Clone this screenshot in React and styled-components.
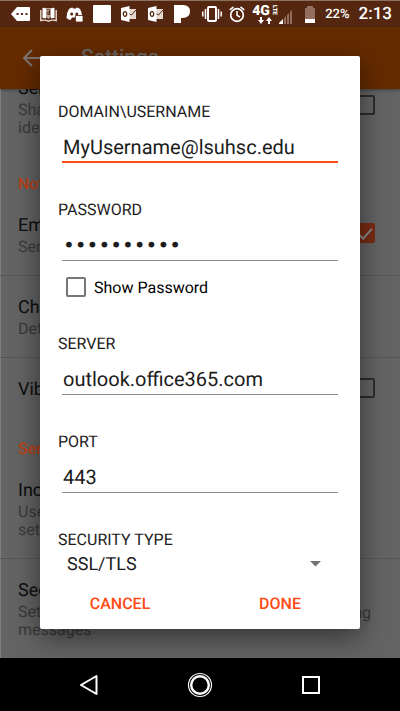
import React, { useState } from 'react';
import styled, { createGlobalStyle } from 'styled-components';

const App = () => {
  const [form, setForm] = useState({
    username: 'MyUsername@lsuhsc.edu',
    password: 'password12',
    server: 'outlook.office365.com',
    port: '443',
    security: 'SSL/TLS',
  });
  const [showPassword, setShowPassword] = useState(false);

  const onChange = e => setForm({ ...form, [e.target.name]: e.target.value });

  return (
    <Screen>
      <GlobalStyle />
      <StatusBar />
      <AppBar>
        <BackButton aria-label='Back'>
          <svg width='22' height='20' viewBox='0 0 22 20'>
            <path d='M10 2 2 10l8 8M2 10h19' />
          </svg>
        </BackButton>
        <Title>Settings</Title>
      </AppBar>
      <SettingList />
      <NavBar />
      <Overlay>
        <Dialog
          role='dialog'
          aria-label='Server settings'
          onSubmit={e => e.preventDefault()}
        >
          <Field
            label='DOMAIN\USERNAME'
            name='username'
            value={form.username}
            onChange={onChange}
            $active
          />
          <Field
            label='PASSWORD'
            name='password'
            type={showPassword ? 'text' : 'password'}
            value={form.password}
            onChange={onChange}
          />
          <ShowPassword>
            <CheckBox
              type='checkbox'
              checked={showPassword}
              onChange={() => setShowPassword(!showPassword)}
            />
            Show Password
          </ShowPassword>
          <Field
            label='SERVER'
            name='server'
            value={form.server}
            onChange={onChange}
          />
          <Field
            label='PORT'
            name='port'
            value={form.port}
            onChange={onChange}
          />
          <Label htmlFor='security'>SECURITY TYPE</Label>
          <SelectBox>
            <Select
              id='security'
              name='security'
              value={form.security}
              onChange={onChange}
            >
              <option>SSL/TLS</option>
            </Select>
            <svg width='11' height='6' viewBox='0 0 11 6'>
              <path d='M0 0h11L5.500 5.500z' fill='#737373' />
            </svg>
          </SelectBox>
          <Actions>
            <ActionButton type='button'>CANCEL</ActionButton>
            <ActionButton type='submit'>DONE</ActionButton>
          </Actions>
        </Dialog>
      </Overlay>
    </Screen>
  );
};

export default App;

const Field = ({ label, name, $active, ...rest }) => (
  <FieldGroup>
    <Label htmlFor={name}>{label}</Label>
    <Input id={name} name={name} $active={$active} {...rest} />
  </FieldGroup>
);

const StatusBar = () => (
  <StatusRow>
    <StatusGroup $gap='9px'>
      {/* message */}
      <svg width='20' height='18' viewBox='0 0 20 18'>
        <path d='M6 2h12q1 0 1 1v12q0 1-1 1H6L0 9z' fill='#fff' />
        <path d='M5.500 8h2v2h-2zM10 8h2v2h-2zM14.500 8h2v2h-2z' fill='#552711' />
      </svg>
      {/* reader */}
      <svg width='17' height='18' viewBox='0 0 17 18'>
        <path
          d='M.8 5v10.500q4-1 7.700.7 3.700-1.700 7.700-.7V5'
          fill='none'
          stroke='#e6d9d2'
          strokeWidth='1.400'
        />
        <path d='M2.500 3q2-.5 3.500.5v10q-1.500-.8-3.500-.5zM14.500 3q-2-.5-3.500.5v10q1.500-.8 3.500-.5z' fill='#fff' />
        <path d='M6 3h5v9l-2.500 2L6 12z' fill='#bda79c' />
        <path d='M7 5q1.500-1 2.500 0v5M9.500 7Q7 7 7 8.500T9.500 9' fill='none' stroke='#552711' />
      </svg>
      {/* chat */}
      <svg width='18' height='18' viewBox='0 0 18 18'>
        <path
          d='M3 4q1.500-1.300 3.500-1.500L7 3.500h3l.5-1q2 .2 3.500 1.500 2 3 2 6.500h-6v2H6L4.500 15Q2 14.500.5 13 .5 7.500 3 4z'
          fill='#fff'
        />
        <circle cx='5.700' cy='9' r='1.500' fill='#552711' />
        <circle cx='10.800' cy='9' r='1.500' fill='#552711' />
        <path d='M9.500 10.500h7.500V17H9.500z' fill='#fff' stroke='#552711' strokeWidth='.8' />
      </svg>
      <svg width='18' height='18' viewBox='0 0 18 18'>
        <rect width='18' height='18' rx='1' fill='#fff' />
      </svg>
      <OutlookIcon />
      <OutlookIcon />
      {/* music */}
      <svg width='17' height='18' viewBox='0 0 17 18'>
        <path d='M0 0h9q7 0 7 6.500T8.500 13H7v5H0z' fill='#fff' />
      </svg>
    </StatusGroup>
    <StatusGroup $gap='7px'>
      {/* vibrate */}
      <svg width='20' height='18' viewBox='0 0 20 18' fill='none' stroke='#fff'>
        <rect x='6' y='2' width='8' height='14' rx='1' strokeWidth='2' />
        <path d='M3.500 4v10M.8 6.500v5M16.500 4v10M19.200 6.500v5' strokeWidth='1.500' />
      </svg>
      {/* alarm */}
      <svg width='16' height='18' viewBox='0 0 16 18' fill='none' stroke='#fff'>
        <circle cx='8' cy='10' r='6.300' strokeWidth='1.700' />
        <path d='M8 6v4.300l3 1.700M.8 4.800 4.500 1.800M15.200 4.800l-3.700-3' strokeWidth='1.500' />
      </svg>
      <StatusGroup $gap='1px'>
        <Network>
          <NetworkType>
            4G<small>LTE</small>
          </NetworkType>
          <svg width='16' height='7' viewBox='0 0 16 7'>
            <path d='M3 0h2v3h2L4 7 1 3h2zM11 7h2V4h2l-3-4-3 4h2z' fill='#fff' />
          </svg>
        </Network>
        {/* signal */}
        <Signal width='14' height='14' viewBox='0 0 14 14'>
          <path d='M0 14v-1l4-4v5z' fill='#fff' />
          <path d='M5 14V8l2-2v8zM8 14V5l2-2v11zM11 14V2l2-2v14z' fill='#946f60' />
        </Signal>
      </StatusGroup>
    </StatusGroup>
    <StatusGroup $gap='9px'>
      {/* battery */}
      <svg width='12' height='17' viewBox='0 0 12 17'>
        <path d='M3 0h6v2h2v11H1V2h2z' fill='#946f60' />
        <path d='M1 13h10v4H1z' fill='#fff' />
      </svg>
      <Battery>22%</Battery>
      <Clock>2:13</Clock>
    </StatusGroup>
  </StatusRow>
);

const OutlookIcon = () => (
  <svg width='18' height='18' viewBox='0 0 18 18'>
    <path d='M9 4h7v10H9z' fill='#e6d9d2' />
    <path d='m9 8.500 2.500 1.500L16 5' fill='none' stroke='#552711' />
    <path d='M1 3l8.500-2v16L1 15z' fill='#fff' />
    <ellipse cx='5' cy='9' rx='1.700' ry='2.300' fill='none' stroke='#552711' strokeWidth='1.300' />
  </svg>
);

const SettingList = () => (
  <List>
    <Row title='Sender' text={['Share', 'identity']} checked={false} />
    <Header>Notify</Header>
    <Row title='Email' text={['Send']} checked />
    <Row title='Choose' text={['Default']} line />
    <Row title='Vibrate' checked={false} line />
    <Header>Serve</Header>
    <Row title='Incoming' text={['User', 'sets']} />
    <Row title='Security' text={['Set up', 'messages']} end='signing' line />
  </List>
);

const Row = ({ title, text = [], checked, end, line }) => (
  <Item $line={line}>
    <div>
      <ItemTitle>{title}</ItemTitle>
      {text.map(t => (
        <ItemText key={t}>{t}</ItemText>
      ))}
    </div>
    {end && <ItemEnd>{end}</ItemEnd>}
    {checked !== undefined && (
      <CheckBox
        type='checkbox'
        aria-label={title}
        defaultChecked={checked}
        $dim
      />
    )}
  </Item>
);

const NavBar = () => (
  <Nav>
    <NavButton aria-label='Back'>
      <svg width='20' height='22' viewBox='0 0 20 22'>
        <path d='M17.500 2v18L2 11z' strokeWidth='2' strokeLinejoin='round' />
      </svg>
    </NavButton>
    <NavButton aria-label='Home'>
      <svg width='26' height='26' viewBox='0 0 26 26'>
        <circle cx='13' cy='13' r='11.500' strokeWidth='1.200' />
        <circle cx='13' cy='13' r='8.800' strokeWidth='2.400' />
      </svg>
    </NavButton>
    <NavButton aria-label='Recent apps'>
      <svg width='20' height='20' viewBox='0 0 20 20'>
        <rect x='2' y='2' width='16' height='16' strokeWidth='2' />
      </svg>
    </NavButton>
  </Nav>
);

const GlobalStyle = createGlobalStyle`
  * {
    box-sizing: border-box;
  }
  body {
    margin: 0;
    font-family: Roboto, 'Liberation Sans', sans-serif;
    text-rendering: geometricPrecision;
  }
  button, input, select {
    font: inherit;
    text-rendering: inherit;
    border: none;
    padding: 0;
    background: none;
    outline: none;
  }
  svg {
    display: block;
    flex: none;
  }
`;

const Screen = styled.div`
  position: relative;
  display: flex;
  flex-direction: column;
  height: 100vh;
  overflow: hidden;
  background: #646464;
`;

const StatusRow = styled.div`
  display: flex;
  align-items: center;
  justify-content: space-between;
  height: 27px;
  flex: none;
  padding: 0 8px 0 11px;
  border-top: 1px solid #8d7060;
  background: #552711;
  color: #fff;
`;

const StatusGroup = styled.div`
  display: flex;
  align-items: center;
  gap: ${({ $gap }) => $gap};
`;

const Network = styled.div`
  display: flex;
  flex-direction: column;
  align-items: center;
`;

const NetworkType = styled.div`
  display: flex;
  font-size: 14px;
  font-weight: 900;
  line-height: 12px;
  small {
    font-size: 6px;
    line-height: 8px;
    writing-mode: vertical-rl;
  }
`;

const Signal = styled.svg`
  align-self: flex-end;
`;

const Battery = styled.span`
  font-size: 13px;
  font-weight: 500;
`;

const Clock = styled.span`
  font-size: 17px;
  font-weight: 500;
`;

const AppBar = styled.header`
  display: flex;
  align-items: center;
  height: 62px;
  flex: none;
  padding: 0 22px;
  background: #652b00;
  box-shadow: 0 1px 3px rgba(0, 0, 0, 0.4);
  color: #6c6663;
  z-index: 1;
`;

const BackButton = styled.button`
  width: 59px;
  svg {
    fill: none;
    stroke: #7c7470;
    stroke-width: 2;
  }
`;

const Title = styled.h1`
  margin: 0;
  font-size: 21px;
  font-weight: 500;
`;

const List = styled.main`
  display: flex;
  flex: 1;
  flex-direction: column;
  justify-content: flex-end;
  min-height: 0;
  box-shadow: inset 1px 0 #808080;
`;

const Header = styled.h2`
  margin: 0;
  padding: 19px 18px 0;
  color: #bf4015;
  font-size: 16px;
  font-weight: 500;
  line-height: 18px;
`;

const Item = styled.div`
  display: flex;
  align-items: center;
  justify-content: space-between;
  padding: 21px 25px 19px 18px;
  box-shadow: ${({ $line }) => ($line ? 'inset 0 1px #575757' : 'none')};
`;

const ItemTitle = styled.div`
  color: #0d0d0d;
  font-size: 18px;
  line-height: 24px;
`;

const ItemText = styled.div`
  color: #3a3a3a;
  font-size: 16px;
  line-height: 18px;
`;

const ItemEnd = styled.span`
  padding: 8px 4px 0 0;
  color: #3a3a3a;
  font-size: 16px;
  line-height: 18px;
`;

const CheckBox = styled.input`
  appearance: none;
  width: 20px;
  height: 20px;
  flex: none;
  margin: 0 0 ${({ $dim }) => ($dim ? '4px' : '0')};
  border: 2px solid ${({ $dim }) => ($dim ? '#2d2d2d' : '#757575')};
  border-radius: 2px;
  &:checked {
    border-color: ${({ $dim }) => ($dim ? '#7a2c12' : '#ff5722')};
    background: ${({ $dim }) => ($dim ? '#7a2c12' : '#ff5722')};
  }
  &:checked::after {
    content: '';
    display: block;
    width: 6px;
    height: 12px;
    margin: 0 auto;
    border: solid #8a8a8a;
    border-width: 0 2px 2px 0;
    transform: rotate(42deg);
  }
`;

const Nav = styled.nav`
  display: grid;
  grid-template-columns: 1fr 1fr 1fr;
  align-items: center;
  justify-items: center;
  height: 53px;
  flex: none;
  padding: 0 34px;
  background: #000;
  z-index: 1;
`;

const NavButton = styled.button`
  svg {
    fill: none;
    stroke: #fff;
  }
`;

const Overlay = styled.div`
  position: absolute;
  inset: 27px 0 53px;
  display: flex;
  align-items: center;
  padding: 0 40px;
  z-index: 2;
  overflow: hidden;
`;

const Dialog = styled.form`
  display: flex;
  flex: 1;
  flex-direction: column;
  min-width: 0;
  padding: 45px 0 8px;
  border-radius: 2px;
  background: #fff;
  box-shadow: 0 8px 28px rgba(0, 0, 0, 0.5);
  color: #1c1c1c;
`;

const FieldGroup = styled.div`
  display: flex;
  flex-direction: column;
  margin-bottom: 36px;
`;

const Label = styled.label`
  padding: 0 18px;
  font-size: 16px;
  line-height: 22px;
`;

const Input = styled.input`
  height: 40px;
  min-width: 0;
  margin: 0 22px;
  padding: ${({ $active }) => ($active ? '9px' : '8px')} 1px 0;
  border-bottom: ${({ $active }) =>
    $active ? '2px solid #ff4a14' : '1px solid #8c8c8c'};
  color: #1c1c1c;
  font-size: 20px;
  &[type='password'] {
    font-family: 'DejaVu Sans', sans-serif;
  }
`;

const ShowPassword = styled.label`
  display: flex;
  align-items: center;
  gap: 8px;
  height: 32px;
  margin: -26px 26px 30px;
  color: #000;
  font-size: 16px;
`;

const SelectBox = styled.div`
  display: flex;
  align-items: center;
  padding: 0 39px 0 27px;
`;

const Select = styled.select`
  flex: 1;
  appearance: none;
  height: 26px;
  color: #1c1c1c;
  font-size: 18px;
`;

const Actions = styled.div`
  display: grid;
  grid-template-columns: 1fr 1fr;
  margin-top: 8px;
`;

const ActionButton = styled.button`
  height: 36px;
  color: #ff4a14;
  font-size: 16px;
  font-weight: 500;
`;
